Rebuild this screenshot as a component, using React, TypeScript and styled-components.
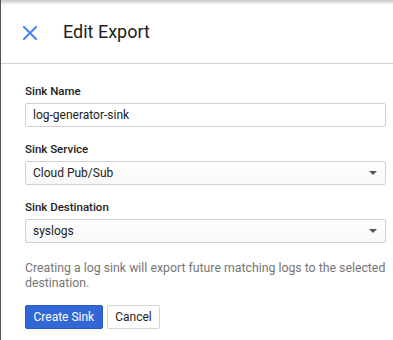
import React from "react";
import styled, { createGlobalStyle } from "styled-components";

const Global = createGlobalStyle`
  html, body { margin: 0; padding: 0; background: #fff; }
  body { font-family: Roboto, "Noto Sans", Arial, sans-serif; }
  * { box-sizing: border-box; }
`;

const Panel = styled.div`
  width: 393px;
  height: 340px;
  background: #fff;
  border-left: 1px solid #555;
  position: relative;
  overflow: hidden;
  &::before {
    content: "";
    position: absolute;
    left: 0; right: 0; top: 0;
    height: 5px;
    background: linear-gradient(to bottom, rgba(0,0,0,0.22), rgba(0,0,0,0));
  }
`;

const Header = styled.div`
  height: 64px;
  display: flex;
  align-items: center;
  border-bottom: 1px solid #d4d4d4;
  padding-left: 21px;
`;

const CloseBtn = styled.button`
  border: 0;
  background: none;
  padding: 0;
  width: 16px;
  height: 16px;
  margin-top: 2px;
  display: flex;
  align-items: center;
  justify-content: center;
  cursor: pointer;
`;

const Title = styled.h1`
  margin: 0 0 0 25px;
  font-size: 18px;
  font-weight: 400;
  color: #212121;
`;

const Body = styled.div`
  padding: 20px 8px 0 24px;
  display: flex;
  flex-direction: column;
`;

const Field = styled.div`
  display: flex;
  flex-direction: column;
  margin-bottom: 15px;
`;

const Label = styled.label`
  font-size: 11.5px;
  font-weight: 500;
  color: #212121;
  line-height: 14px;
  margin-bottom: 5px;
`;

const Input = styled.input`
  width: 361px;
  height: 24px;
  border: 1px solid #d0d0d0;
  border-radius: 2px;
  padding: 0 7px;
  font-family: Roboto, Arial, sans-serif;
  font-size: 12px;
  color: #212121;
  outline: none;
`;

const SelectBox = styled.div`
  width: 361px;
  height: 24px;
  border: 1px solid #d0d0d0;
  border-radius: 2px;
  padding: 0 8px 0 7px;
  display: flex;
  align-items: center;
  justify-content: space-between;
  font-size: 12px;
  color: #212121;
  background: linear-gradient(to bottom, #ffffff, #f7f7f7);
`;

const Caret = styled.span`
  width: 0;
  height: 0;
  border-left: 4px solid transparent;
  border-right: 4px solid transparent;
  border-top: 4px solid #555;
`;

const Help = styled.p`
  margin: 3px 0 0 0;
  font-size: 12.3px;
  line-height: 15px;
  color: #757575;
  width: 362px;
`;

const Buttons = styled.div`
  display: flex;
  gap: 4px;
  margin-top: 14px;
`;

const Button = styled.button<{ $primary?: boolean }>`
  height: 24px;
  padding: 0 7.5px;
  border-radius: 2px;
  font-family: Roboto, Arial, sans-serif;
  font-size: 12px;
  cursor: pointer;
  border: 1px solid ${(p) => (p.$primary ? "#2a56c6" : "#d6d6d6")};
  background: ${(p) => (p.$primary ? "#3367d6" : "#fff")};
  color: ${(p) => (p.$primary ? "#fff" : "#212121")};
`;

export default function App() {
  return (
    <>
      <Global />
      <Panel>
        <Header>
          <CloseBtn aria-label="Close">
            <svg width="14" height="14" viewBox="0 0 14 14">
              <path d="M1 1 L13 13 M13 1 L1 13" stroke="#4285f4" strokeWidth="2" strokeLinecap="square" />
            </svg>
          </CloseBtn>
          <Title>Edit Export</Title>
        </Header>
        <Body>
          <Field>
            <Label>Sink Name</Label>
            <Input defaultValue="log-generator-sink" />
          </Field>
          <Field>
            <Label>Sink Service</Label>
            <SelectBox>
              <span>Cloud Pub/Sub</span>
              <Caret />
            </SelectBox>
          </Field>
          <Field>
            <Label>Sink Destination</Label>
            <SelectBox>
              <span>syslogs</span>
              <Caret />
            </SelectBox>
          </Field>
          <Help>Creating a log sink will export future matching logs to the selected destination.</Help>
          <Buttons>
            <Button $primary>Create Sink</Button>
            <Button>Cancel</Button>
          </Buttons>
        </Body>
      </Panel>
    </>
  );
}
